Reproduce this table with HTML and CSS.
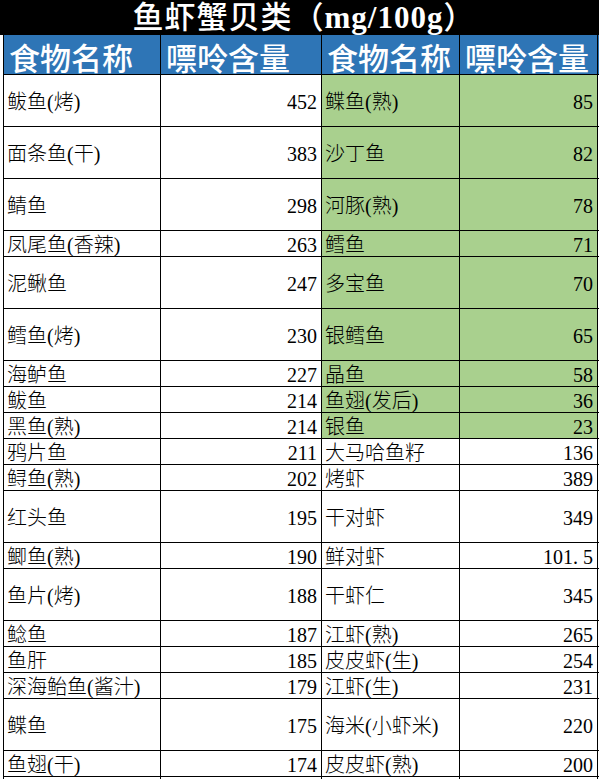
FILE: index.html
```html
<!DOCTYPE html>
<html lang="zh-CN">
<head>
<meta charset="utf-8">
<title>鱼虾蟹贝类</title>
<link rel="stylesheet" href="styles.css">
</head>
<body>
<div class="title">鱼虾蟹贝类（<span class="unit">mg/100g</span>）</div>
<div class="sheet">
  <div class="row head">
    <div class="cell">食物名称</div>
    <div class="cell">嘌呤含量</div>
    <div class="cell">食物名称</div>
    <div class="cell">嘌呤含量</div>
  </div>
  <div class="row tall green">
    <div class="cell name">鲅鱼(烤)</div><div class="cell num">452</div>
    <div class="cell name">鲽鱼(熟)</div><div class="cell num">85</div>
  </div>
  <div class="row tall green">
    <div class="cell name">面条鱼(干)</div><div class="cell num">383</div>
    <div class="cell name">沙丁鱼</div><div class="cell num">82</div>
  </div>
  <div class="row tall green">
    <div class="cell name">鲭鱼</div><div class="cell num">298</div>
    <div class="cell name">河豚(熟)</div><div class="cell num">78</div>
  </div>
  <div class="row short green">
    <div class="cell name">凤尾鱼(香辣)</div><div class="cell num">263</div>
    <div class="cell name">鳕鱼</div><div class="cell num">71</div>
  </div>
  <div class="row tall green">
    <div class="cell name">泥鳅鱼</div><div class="cell num">247</div>
    <div class="cell name">多宝鱼</div><div class="cell num">70</div>
  </div>
  <div class="row tall green">
    <div class="cell name">鳕鱼(烤)</div><div class="cell num">230</div>
    <div class="cell name">银鳕鱼</div><div class="cell num">65</div>
  </div>
  <div class="row short green">
    <div class="cell name">海鲈鱼</div><div class="cell num">227</div>
    <div class="cell name">晶鱼</div><div class="cell num">58</div>
  </div>
  <div class="row short green">
    <div class="cell name">鲅鱼</div><div class="cell num">214</div>
    <div class="cell name">鱼翅(发后)</div><div class="cell num">36</div>
  </div>
  <div class="row short green">
    <div class="cell name">黑鱼(熟)</div><div class="cell num">214</div>
    <div class="cell name">银鱼</div><div class="cell num">23</div>
  </div>
  <div class="row short">
    <div class="cell name">鸦片鱼</div><div class="cell num">211</div>
    <div class="cell name">大马哈鱼籽</div><div class="cell num">136</div>
  </div>
  <div class="row short">
    <div class="cell name">鲟鱼(熟)</div><div class="cell num">202</div>
    <div class="cell name">烤虾</div><div class="cell num">389</div>
  </div>
  <div class="row tall">
    <div class="cell name">红头鱼</div><div class="cell num">195</div>
    <div class="cell name">干对虾</div><div class="cell num">349</div>
  </div>
  <div class="row short">
    <div class="cell name">鲫鱼(熟)</div><div class="cell num">190</div>
    <div class="cell name">鲜对虾</div><div class="cell num">101<span class="dot">.</span>5</div>
  </div>
  <div class="row tall">
    <div class="cell name">鱼片(烤)</div><div class="cell num">188</div>
    <div class="cell name">干虾仁</div><div class="cell num">345</div>
  </div>
  <div class="row short">
    <div class="cell name">鲶鱼</div><div class="cell num">187</div>
    <div class="cell name">江虾(熟)</div><div class="cell num">265</div>
  </div>
  <div class="row short">
    <div class="cell name">鱼肝</div><div class="cell num">185</div>
    <div class="cell name">皮皮虾(生)</div><div class="cell num">254</div>
  </div>
  <div class="row short">
    <div class="cell name">深海鲐鱼(酱汁)</div><div class="cell num">179</div>
    <div class="cell name">江虾(生)</div><div class="cell num">231</div>
  </div>
  <div class="row tall">
    <div class="cell name">鲽鱼</div><div class="cell num">175</div>
    <div class="cell name">海米(小虾米)</div><div class="cell num">220</div>
  </div>
  <div class="row short">
    <div class="cell name">鱼翅(干)</div><div class="cell num">174</div>
    <div class="cell name">皮皮虾(熟)</div><div class="cell num">200</div>
  </div>
  <div class="row short">
    <div class="cell name"></div><div class="cell num"></div>
    <div class="cell name"></div><div class="cell num"></div>
  </div>
</div>
</body>
</html>
```

FILE: styles.css
```css
html, body {
  margin: 0;
  padding: 0;
  background: #ffffff;
  overflow: hidden;
}

.title {
  height: 35px;
  padding-left: 9px;
  background: #000000;
  color: #ffffff;
  font-family: "Liberation Serif", "Noto Sans CJK SC", serif;
  font-weight: 500;
  font-size: 31px;
  letter-spacing: 1px;
  line-height: 36px;
  text-align: center;
  white-space: nowrap;
}

.title .unit {
  font-weight: bold;
}

.sheet {
  margin-left: 3px;
  width: 595px;
  border-left: 1px solid #000000;
}

.row {
  display: grid;
  grid-template-columns: 157px 161px 138px 138px;
  border-bottom: 1px solid #000000;
}

.row.tall { height: 51px; }
.row.short { height: 25px; }

.cell {
  display: flex;
  align-items: center;
  border-right: 1px solid #000000;
  font-family: "Liberation Serif", "Noto Sans CJK SC", serif;
  font-size: 20px;
  font-weight: 300;
  line-height: 20px;
  color: #000000;
  white-space: nowrap;
  overflow: visible;
}

.cell.name {
  padding-left: 3px;
  padding-top: 3px;
}

.cell.num {
  justify-content: flex-end;
  padding-right: 4px;
  padding-top: 3px;
}

.dot {
  display: inline-block;
  width: 10px;
}

.row.green .cell:nth-child(3),
.row.green .cell:nth-child(4) {
  background: #a9d08e;
}

.row.head {
  height: 39px;
  background: #2e75b6;
}

.row.head .cell {
  font-family: "Noto Sans CJK SC", sans-serif;
  font-size: 31px;
  line-height: 31px;
  font-weight: 500;
  color: #ffffff;
  align-items: flex-end;
  padding-left: 5px;
  padding-bottom: 2px;
}
```
